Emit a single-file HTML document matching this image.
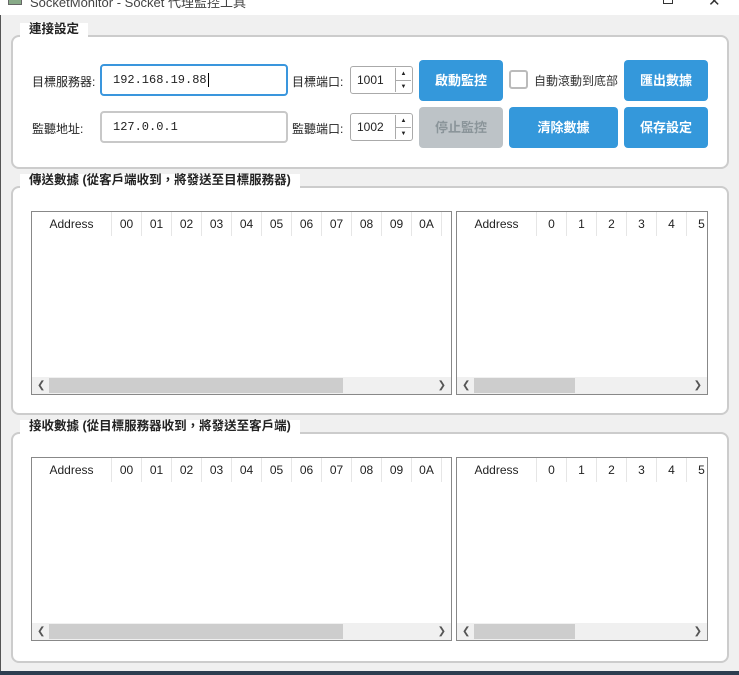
<!DOCTYPE html><html><head><meta charset="utf-8"><style>
*{box-sizing:border-box;margin:0;padding:0}
body{width:739px;height:675px;overflow:hidden;background:#f0f0f0;font-family:"Liberation Sans","Noto Sans CJK TC",sans-serif;font-size:12px;color:#222;position:relative}
.abs{position:absolute}
.title{left:0;top:0;width:739px;height:15px;background:#fff;overflow:hidden}
.gb{position:absolute;left:11px;width:718px;background:#fff;border:2px solid #ccc;border-radius:8px}
.lg{position:absolute;left:20px;height:14px;background:#fff;font-weight:bold;font-size:12.5px;line-height:12px;padding:0 9px;color:#222}
.inp{position:absolute;left:100px;width:188px;height:32px;border:2px solid #c8c8c8;border-radius:4px;font-family:"Liberation Mono",monospace;font-size:12px;line-height:28px;padding-left:11px}
.spin{position:absolute;left:350px;width:63px;height:28px;border:1px solid #aaa;border-radius:3px;background:#fff;font-size:12px;line-height:26px;padding-left:6px}
.spin i{position:absolute;right:1px;width:16px;height:12px;border-left:1px solid #aaa;font-style:normal;font-size:6px;text-align:center;line-height:12px}
.btn{position:absolute;height:41px;background:#3498db;border-radius:4px;color:#fff;font-weight:bold;font-size:13px;text-align:center;line-height:41px}
.lbl{position:absolute;font-size:12px}
.tbl{position:absolute;height:184px;background:#fff;border:1px solid #888}
.hd{position:absolute;top:0;left:0;height:24px;white-space:nowrap;overflow:hidden}
.hd span{display:inline-block;width:30px;text-align:center;font-size:12px;line-height:24px;border-right:1px solid #e6e6e6;height:24px;vertical-align:top}
.hd span.a{width:80px}
.sb{position:absolute;left:0;right:0;bottom:0;height:17px;background:#f0f0f0}
.th{position:absolute;top:1px;height:15px;background:#cdcdcd}
.ar{position:absolute;top:0;font-size:10px;line-height:17px;color:#555}
</style></head><body>
<div class="abs title"><div class="abs" style="left:8px;top:-4px;width:14px;height:9px;background:#8a8;border:1px solid #666"></div><div class="abs" style="left:30px;top:-8px;font-size:13px;color:#444">SocketMonitor - Socket 代理監控工具</div>
<div class="abs" style="left:663px;top:-6px;width:10px;height:10px;border:1px solid #333"></div>
<div class="abs" style="left:708px;top:-8px;font-size:15px;color:#333">✕</div></div>
<div class="abs" style="left:0;top:15px;width:1px;height:660px;background:#555"></div>

<div class="gb" style="top:35px;height:134px"></div>
<div class="lg" style="top:23px">連接設定</div>
<div class="lbl" style="left:32px;top:73px">目標服務器:</div>
<div class="inp" style="top:64px;border-color:#3a96dd">192.168.19.88<span style="border-left:1px solid #000;margin-left:1px"></span></div>
<div class="lbl" style="left:292px;top:73px">目標端口:</div>
<div class="spin" style="top:66px">1001<i style="top:1px">▲</i><i style="top:13px;border-top:1px solid #aaa">▼</i></div>
<div class="lbl" style="left:32px;top:120px">監聽地址:</div>
<div class="inp" style="top:111px">127.0.0.1</div>
<div class="lbl" style="left:292px;top:120px">監聽端口:</div>
<div class="spin" style="top:113px">1002<i style="top:1px">▲</i><i style="top:13px;border-top:1px solid #aaa">▼</i></div>
<div class="btn" style="left:419px;top:60px;width:84px">啟動監控</div>
<div class="abs" style="left:509px;top:70px;width:19px;height:19px;border:2px solid #bbb;border-radius:3px;background:#fff"></div>
<div class="lbl" style="left:534px;top:72px;color:#333">自動滾動到底部</div>
<div class="btn" style="left:624px;top:60px;width:84px">匯出數據</div>
<div class="btn" style="left:419px;top:107px;width:84px;background:#bdc3c7;color:#8b959a">停止監控</div>
<div class="btn" style="left:509px;top:107px;width:109px">清除數據</div>
<div class="btn" style="left:624px;top:107px;width:84px">保存設定</div>

<div class="gb" style="top:186px;height:229px"></div>
<div class="lg" style="top:174px">傳送數據 (從客戶端收到，將發送至目標服務器)</div>
<div class="gb" style="top:432px;height:231px"></div>
<div class="lg" style="top:420px">接收數據 (從目標服務器收到，將發送至客戶端)</div>

<div class="tbl" style="left:31px;top:211px;width:421px"><div class="hd"><span class="a">Address</span><span>00</span><span>01</span><span>02</span><span>03</span><span>04</span><span>05</span><span>06</span><span>07</span><span>08</span><span>09</span><span>0A</span></div><div class="sb"><span class="ar" style="left:5px">❮</span><div class="th" style="left:17px;width:294px"></div><span class="ar" style="right:5px">❯</span></div></div>
<div class="tbl" style="left:456px;top:211px;width:252px"><div class="hd" style="width:250px"><span class="a">Address</span><span>0</span><span>1</span><span>2</span><span>3</span><span>4</span><span>5</span></div><div class="sb"><span class="ar" style="left:5px">❮</span><div class="th" style="left:17px;width:101px"></div><span class="ar" style="right:5px">❯</span></div></div>
<div class="tbl" style="left:31px;top:457px;width:421px"><div class="hd"><span class="a">Address</span><span>00</span><span>01</span><span>02</span><span>03</span><span>04</span><span>05</span><span>06</span><span>07</span><span>08</span><span>09</span><span>0A</span></div><div class="sb"><span class="ar" style="left:5px">❮</span><div class="th" style="left:17px;width:294px"></div><span class="ar" style="right:5px">❯</span></div></div>
<div class="tbl" style="left:456px;top:457px;width:252px"><div class="hd" style="width:250px"><span class="a">Address</span><span>0</span><span>1</span><span>2</span><span>3</span><span>4</span><span>5</span></div><div class="sb"><span class="ar" style="left:5px">❮</span><div class="th" style="left:17px;width:101px"></div><span class="ar" style="right:5px">❯</span></div></div>

<div class="abs" style="left:0;top:671px;width:739px;height:4px;background:#2d3e50"></div>
</body></html>
